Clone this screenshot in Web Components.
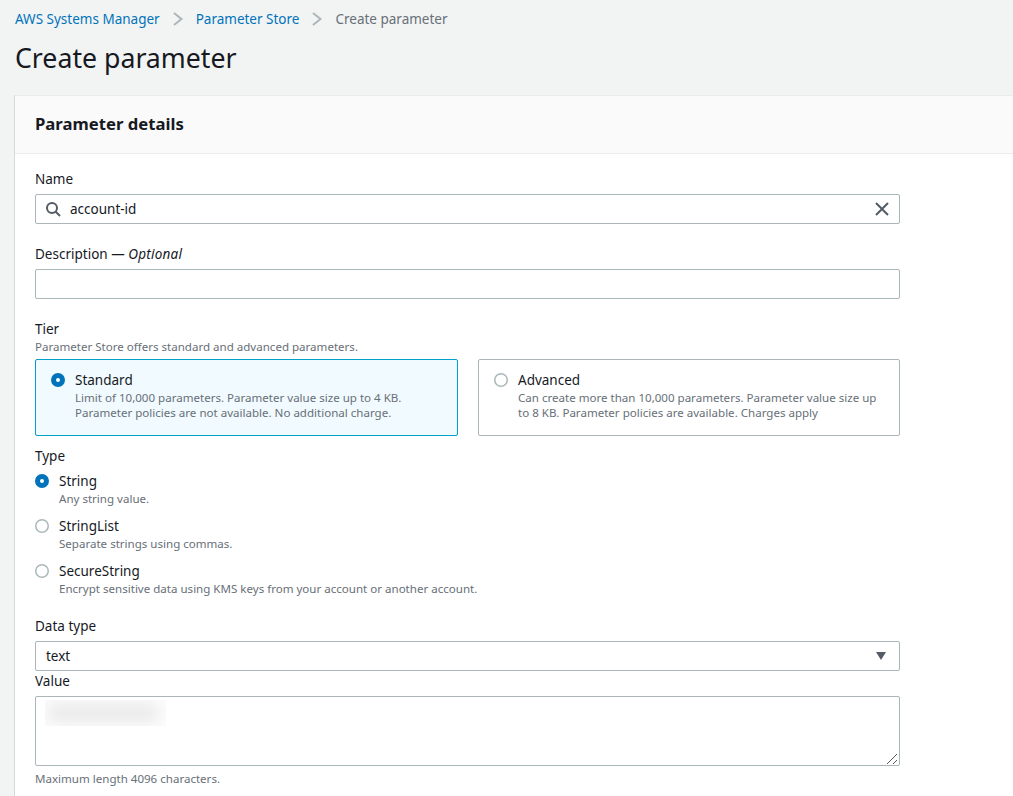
<!DOCTYPE html>
<html lang="en">
<head>
<meta charset="utf-8">
<title>Create parameter</title>
<style>
  html, body { margin: 0; height: 100%; overflow: hidden; }
  body { background: #f2f3f3; color: #16191f; font: 13.5px/22px "Noto Sans", "Open Sans", sans-serif; }
</style>
</head>
<body>
<aws-page>
  <aws-breadcrumbs slot="crumbs">
    <a-crumb href="#">AWS Systems Manager</a-crumb>
    <a-crumb href="#">Parameter Store</a-crumb>
    <a-crumb>Create parameter</a-crumb>
  </aws-breadcrumbs>
  <span slot="title">Create parameter</span>
  <aws-card>
    <span slot="header">Parameter details</span>

    <aws-field label="Name">
      <aws-input value="account-id" search clear></aws-input>
    </aws-field>

    <aws-field label="Description" optional style="margin-top:19px">
      <aws-input></aws-input>
    </aws-field>

    <aws-field label="Tier" hint="Parameter Store offers standard and advanced parameters." style="margin-top:19px">
      <aws-tiles>
        <aws-radio tile checked label="Standard">Limit of 10,000 parameters. Parameter value size up to 4 KB.<br>Parameter policies are not available. No additional charge.</aws-radio>
        <aws-radio tile label="Advanced">Can create more than 10,000 parameters. Parameter value size up to 8 KB. Parameter policies are available. Charges apply</aws-radio>
      </aws-tiles>
    </aws-field>

    <aws-field label="Type" style="margin-top:9px" tight>
      <aws-radio checked label="String">Any string value.</aws-radio>
      <aws-radio label="StringList">Separate strings using commas.</aws-radio>
      <aws-radio label="SecureString">Encrypt sensitive data using KMS keys from your account or another account.</aws-radio>
    </aws-field>

    <aws-field label="Data type" style="margin-top:19px">
      <aws-select value="text"></aws-select>
    </aws-field>

    <aws-field label="Value" footer="Maximum length 4096 characters." style="margin-top:-1px">
      <aws-textarea></aws-textarea>
    </aws-field>
  </aws-card>
</aws-page>

<script>
  // every element fills its open shadow root from a string
  function shadow(el, html) {
    el.attachShadow({ mode: 'open' }).innerHTML = html;
  }

  customElements.define('aws-page', class extends HTMLElement {
    constructor() {
      super();
      shadow(this, `
        <style>
          :host { display: block; padding: 8px 0 0 15px; }
          h1 { margin: 9px 0 0 0; font-size: 26.7px; line-height: 38px; font-weight: 400; color: #16191f; height: 56px; }
        </style>
        <slot name="crumbs"></slot>
        <h1><slot name="title"></slot></h1>
        <slot></slot>`);
    }
  });

  customElements.define('aws-breadcrumbs', class extends HTMLElement {
    constructor() {
      super();
      shadow(this, `
        <style>
          :host { display: flex; align-items: center; height: 22px; }
        </style>
        <slot></slot>`);
    }
  });

  customElements.define('a-crumb', class extends HTMLElement {
    constructor() {
      super();
      const link = this.hasAttribute('href');
      shadow(this, `
        <style>
          :host { display: inline-flex; align-items: center; font-size: 13.5px; white-space: nowrap; color: ${link ? '#0073bb' : '#687078'}; }
          svg { width: 10px; height: 14px; margin: 0 13px; }
        </style>
        <slot></slot>
        ${link ? '<svg viewBox="0 0 10 14"><path d="M1 1l7.5 6L1 13" fill="none" stroke="#aab7b8" stroke-width="2"/></svg>' : ''}`);
    }
  });

  customElements.define('aws-card', class extends HTMLElement {
    constructor() {
      super();
      shadow(this, `
        <style>
          :host { display: block; height: 720px; background: #fff; border-top: 1px solid #eaeded; box-shadow: -1px 0 0 #d5dbdb; }
          header { height: 58px; box-sizing: border-box; padding: 0 20px 2px; display: flex; align-items: center; background: #fafafa; border-bottom: 1px solid #eaeded; font-size: 16.7px; font-weight: 700; color: #16191f; }
          .body { padding: 14px 0 0 20px; width: 865px; }
        </style>
        <header><slot name="header"></slot></header>
        <div class="body"><slot></slot></div>`);
    }
  });

  customElements.define('aws-field', class extends HTMLElement {
    constructor() {
      super();
      const label = this.getAttribute('label');
      const hint = this.getAttribute('hint');
      const footer = this.getAttribute('footer');
      const opt = this.hasAttribute('optional') ? ' — <i>Optional</i>' : '';
      shadow(this, `
        <style>
          :host { display: block; }
          .label { font-size: 13.5px; line-height: 22px; color: #16191f; }
          .hint { font-size: 11.55px; line-height: 15px; color: #687078; margin-top: -1px; }
          .control { margin-top: 4px; }
          :host([hint]) .control { margin-top: 5px; }
          :host([tight]) .control { margin-top: 3px; display: flex; flex-direction: column; gap: 9px; }
          .footer { font-size: 11.55px; line-height: 15px; color: #687078; margin-top: 5px; }
          i { letter-spacing: 0.25px; }
        </style>
        <div class="label">${label}${opt}</div>
        ${hint ? `<div class="hint">${hint}</div>` : ''}
        <div class="control"><slot></slot></div>
        ${footer ? `<div class="footer">${footer}</div>` : ''}`);
    }
  });

  const BOX = 'box-sizing: border-box; background: #fff; border: 1px solid #aab7b8; border-radius: 2px; color: #16191f;';

  customElements.define('aws-input', class extends HTMLElement {
    constructor() {
      super();
      const search = this.hasAttribute('search');
      const clear = this.hasAttribute('clear');
      shadow(this, `
        <style>
          :host { display: flex; align-items: center; height: 30px; ${BOX} padding: 0 9px; font-size: 13.5px; }
          .v { flex: 1; }
          svg { display: block; width: 16px; height: 16px; flex: none; }
          .s { margin-right: 9px; }
        </style>
        ${search ? '<svg class="s" viewBox="0 0 16 16" fill="none" stroke="#545b64" stroke-width="2"><circle cx="7" cy="7" r="5"/><path d="M10.5 10.5l4.5 4.5"/></svg>' : ''}
        <span class="v">${this.getAttribute('value') || ''}</span>
        ${clear ? '<svg viewBox="0 0 16 16" fill="none" stroke="#545b64" stroke-width="2"><path d="M2 2l12 12M14 2L2 14"/></svg>' : ''}`);
    }
  });

  customElements.define('aws-select', class extends HTMLElement {
    constructor() {
      super();
      shadow(this, `
        <style>
          :host { display: flex; align-items: center; justify-content: space-between; height: 30px; ${BOX} padding: 0 13px 0 10px; font-size: 13.5px; }
          svg { display: block; width: 10px; height: 8px; }
        </style>
        <span>${this.getAttribute('value') || ''}</span>
        <svg viewBox="0 0 10 8"><path d="M0 0h10L5 8z" fill="#545b64"/></svg>`);
    }
  });

  customElements.define('aws-textarea', class extends HTMLElement {
    constructor() {
      super();
      shadow(this, `
        <style>
          :host { display: block; position: relative; height: 70px; ${BOX} }
          .blur { position: absolute; left: 9px; top: 3px; width: 121px; height: 26px; overflow: hidden; background: #fcfcfc; }
          .blur i { position: absolute; left: 4px; top: 6px; width: 108px; height: 14px; background: #e4e4e4; filter: blur(8px); }
          svg { position: absolute; right: 1px; bottom: 0; width: 12px; height: 12px; }
        </style>
        <div class="blur"><i></i></div>
        <svg viewBox="0 0 12 12" fill="none" stroke="#545b64"><path d="M1 11L11 1M7 11l4-4"/></svg>`);
    }
  });

  customElements.define('aws-tiles', class extends HTMLElement {
    constructor() {
      super();
      shadow(this, `
        <style>
          :host { display: grid; grid-template-columns: 423px 422px; gap: 20px; }
        </style>
        <slot></slot>`);
    }
  });

  customElements.define('aws-radio', class extends HTMLElement {
    constructor() {
      super();
      const on = this.hasAttribute('checked');
      shadow(this, `
        <style>
          :host { display: grid; grid-template-columns: 14px 1fr; column-gap: 10px; align-items: start; }
          :host([tile]) { box-sizing: border-box; height: 77px; padding: 9px 15px; border: 1px solid #aab7b8; border-radius: 2px; background: #fff; }
          :host([tile][checked]) { border-color: #00a1c9; background: #f1faff; }
          svg { width: 14px; height: 14px; margin-top: 4px; display: block; }
          .t { font-size: 13.5px; line-height: 22px; color: #16191f; }
          .d { font-size: 11.55px; line-height: 15px; color: #687078; margin-top: -1px; }
        </style>
        <svg viewBox="0 0 14 14">${on
          ? '<circle cx="7" cy="7" r="4.5" fill="#fff" stroke="#0073bb" stroke-width="5"/>'
          : '<circle cx="7" cy="7" r="6.25" fill="#fff" stroke="#aab7b8" stroke-width="1.5"/>'}</svg>
        <div>
          <div class="t">${this.getAttribute('label')}</div>
          <div class="d"><slot></slot></div>
        </div>`);
    }
  });
</script>
</body>
</html>
